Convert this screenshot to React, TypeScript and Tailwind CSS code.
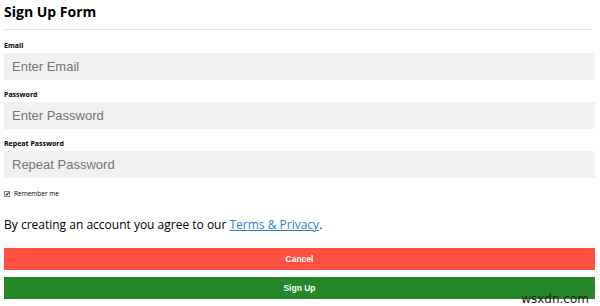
import React from "react";

export default function App() {
  const label = "block text-[7px] font-bold leading-none text-black";
  const input =
    "w-full h-[27px] bg-[#f1f1f1] px-[8px] text-[13px] text-[#767676] placeholder:text-[#767676] outline-none font-['Liberation_Sans',Arial,sans-serif]";
  return (
    <div className="relative w-[600px] h-[306px] bg-white font-['Open_Sans','Noto_Sans',sans-serif] overflow-hidden">
      <div className="px-[4px]">
        <h1 className="pt-[2px] text-[14px] font-bold leading-[20px] text-black">Sign Up Form</h1>
        <div className="mt-[7px] mr-[4px] h-px bg-[#e6e6e6]" />
        <div className="mt-[12px] mr-[1px]">
          <label className={label}>Email</label>
          <input className={`${input} mt-[4px]`} placeholder="Enter Email" />
          <label className={`${label} mt-[11px]`}>Password</label>
          <input className={`${input} mt-[4px]`} placeholder="Enter Password" />
          <label className={`${label} mt-[11px]`}>Repeat Password</label>
          <input className={`${input} mt-[4px]`} placeholder="Repeat Password" />
        </div>
        <div className="mt-[12px] flex items-center gap-[4px] h-[8px]">
          <span className="w-[6px] h-[6px] border border-[#888] flex items-center justify-center text-[6px] leading-none text-black">✔</span>
          <span className="text-[6.5px] text-black leading-none">Remember me</span>
        </div>
        <p className="mt-[18px] text-[12px] leading-[18px] text-black">
          By creating an account you agree to our{" "}
          <a className="text-[#2a7fd0] underline">Terms &amp; Privacy</a>.
        </p>
        <div className="mt-[14px] mr-[1px] flex flex-col gap-[7px] font-['Liberation_Sans',Arial,sans-serif]">
          <button className="h-[22px] w-full bg-[#ff5044] text-white text-[8.5px] font-bold">Cancel</button>
          <button className="h-[22px] w-full bg-[#25862a] text-white text-[8.5px] font-bold">Sign Up</button>
        </div>
      </div>
      <div className="absolute right-[11px] bottom-[1px] text-[12px] text-[#222] font-['DejaVu_Sans',sans-serif] leading-none">wsxdn.com</div>
    </div>
  );
}
